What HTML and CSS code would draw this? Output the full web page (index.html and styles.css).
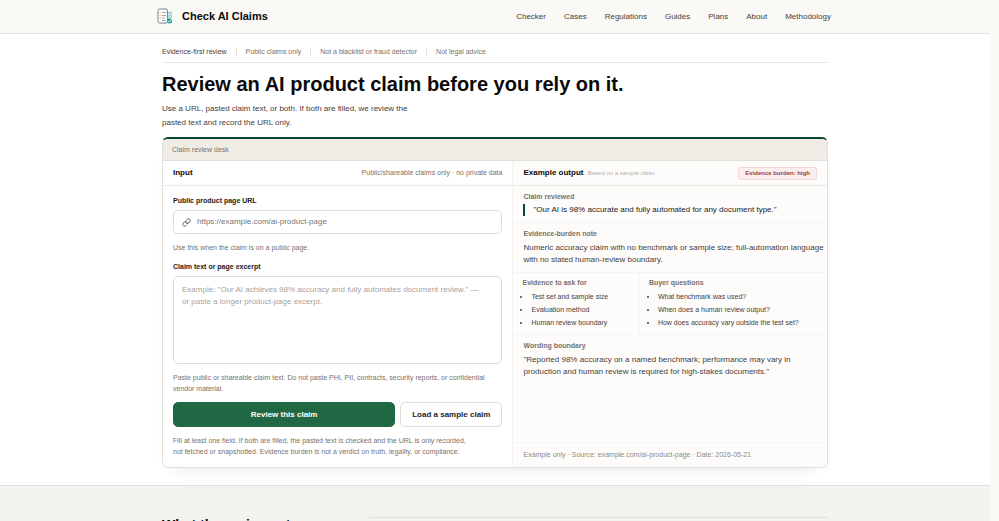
FILE: index.html
```
<!DOCTYPE html>
<html lang="en">
<head>
    <meta charset="UTF-8">
    <meta name="viewport" content="width=device-width, initial-scale=1.0">
    <title>Check AI Claims</title>
    <link rel="stylesheet" href="styles.css">
</head>
<body>
    <header class="site-header">
        <div class="header-inner">
            <a class="brand" href="#">
                <svg class="brand-icon" viewBox="0 0 32 32" fill="none" aria-hidden="true">
                    <rect x="2" y="2" width="19" height="28" rx="3" fill="#fff" stroke="#75808a" stroke-width="2"/>
                    <path d="M10 9h8M10 15h8M10 20h6M10 25h8" stroke="#858f98" stroke-width="1.6"/>
                    <path d="M5 9h3M5 15h3M5 20h3" stroke="#efc27a" stroke-width="2"/>
                    <path d="M21 10h4M21 16h4M21 21h4" stroke="#4bb5b0" stroke-width="1.6"/>
                    <circle cx="27" cy="10" r="2.5" stroke="#4bb5b0" stroke-width="1.5"/>
                    <circle cx="27" cy="17" r="2.5" stroke="#4bb5b0" stroke-width="1.5"/>
                    <circle cx="25" cy="26" r="5" fill="#2aa6a0"/>
                    <path d="M22.5 26l2 2 3.5-4" stroke="#fff" stroke-width="1.5"/>
                </svg>
                <span>Check AI Claims</span>
            </a>
            <nav class="site-nav" aria-label="Main">
                <a href="#">Checker</a>
                <a href="#">Cases</a>
                <a href="#">Regulations</a>
                <a href="#">Guides</a>
                <a href="#">Plans</a>
                <a href="#">About</a>
                <a href="#">Methodology</a>
            </nav>
        </div>
    </header>

    <main>
        <section class="hero">
            <div class="container">
                <ul class="notes">
                    <li>Evidence-first review</li>
                    <li>Public claims only</li>
                    <li>Not a blacklist or fraud detector</li>
                    <li>Not legal advice</li>
                </ul>
                <h1>Review an AI product claim before you rely on it.</h1>
                <p class="lead">Use a URL, pasted claim text, or both. If both are filled, we review the pasted text and record the URL only.</p>

                <div class="desk">
                    <div class="desk-title">Claim review desk</div>
                    <div class="desk-grid">
                        <form class="panel input-panel">
                            <div class="panel-head">
                                <h2>Input</h2>
                                <span class="panel-note">Public/shareable claims only · no private data</span>
                            </div>
                            <div class="form-body">
                                <label for="claim-url">Public product page URL</label>
                                <div class="url-field">
                                    <svg viewBox="0 0 24 24" fill="none" stroke="#57534e" stroke-width="2.4" stroke-linecap="round" stroke-linejoin="round" aria-hidden="true">
                                        <path d="M10 13a5 5 0 0 0 7.54.54l3-3a5 5 0 0 0-7.07-7.07l-1.72 1.71"/>
                                        <path d="M14 11a5 5 0 0 0-7.54-.54l-3 3a5 5 0 0 0 7.07 7.07l1.71-1.71"/>
                                    </svg>
                                    <input type="url" id="claim-url" placeholder="https://example.com/ai-product-page">
                                </div>
                                <p class="hint">Use this when the claim is on a public page.</p>
                                <label for="claim-text">Claim text or page excerpt</label>
                                <textarea id="claim-text" placeholder="Example: &quot;Our AI achieves 98% accuracy and fully automates document review.&quot; — or paste a longer product-page excerpt."></textarea>
                                <p class="hint">Paste public or shareable claim text. Do not paste PHI, PII, contracts, security reports, or confidential vendor material.</p>
                                <div class="actions">
                                    <button type="submit" class="btn btn-primary">Review this claim</button>
                                    <button type="button" class="btn btn-secondary">Load a sample claim</button>
                                </div>
                                <p class="hint fine-print">Fill at least one field. If both are filled, the pasted text is checked and the URL is only recorded, not fetched or snapshotted. Evidence burden is not a verdict on truth, legality, or compliance.</p>
                            </div>
                        </form>

                        <div class="panel output-panel">
                            <div class="panel-head">
                                <h2>Example output <small>Based on a sample claim</small></h2>
                                <span class="badge">Evidence burden: high</span>
                            </div>
                            <div class="block">
                                <h3>Claim reviewed</h3>
                                <blockquote>"Our AI is 98% accurate and fully automated for any document type."</blockquote>
                            </div>
                            <div class="block">
                                <h3>Evidence-burden note</h3>
                                <p>Numeric accuracy claim with no benchmark or sample size; full-automation language with no stated human-review boundary.</p>
                            </div>
                            <div class="lists">
                                <div class="list-col">
                                    <h3>Evidence to ask for</h3>
                                    <ul>
                                        <li>Test set and sample size</li>
                                        <li>Evaluation method</li>
                                        <li>Human review boundary</li>
                                    </ul>
                                </div>
                                <div class="list-col">
                                    <h3>Buyer questions</h3>
                                    <ul>
                                        <li>What benchmark was used?</li>
                                        <li>When does a human review output?</li>
                                        <li>How does accuracy vary outside the test set?</li>
                                    </ul>
                                </div>
                            </div>
                            <div class="block wording">
                                <h3>Wording boundary</h3>
                                <p>"Reported 98% accuracy on a named benchmark; performance may vary in production and human review is required for high-stakes documents."</p>
                            </div>
                            <div class="output-foot">Example only · Source: example.com/ai-product-page · Date: 2026-05-21</div>
                        </div>
                    </div>
                </div>
            </div>
        </section>

        <section class="returns">
            <div class="container returns-grid">
                <h2>What the review returns</h2>
                <div class="returns-list"></div>
            </div>
        </section>
    </main>
</body>
</html>
```
FILE: styles.css
```
* {
    box-sizing: border-box;
}
html {
    background: #faf9f5;
}
body {
    margin: 0 9px 0 0;
    font-family: "Liberation Sans", Arial, sans-serif;
    font-size: 8px;
    line-height: 12px;
    color: #44403c;
}
h1, h2, h3, p, ul, blockquote {
    margin: 0;
    padding: 0;
}
a {
    color: inherit;
    text-decoration: none;
}
.container {
    max-width: 666px;
    margin: 0 auto;
}

/* header */
.site-header {
    background: #faf9f5;
    border-bottom: 1px solid #e7e0da;
}
.header-inner {
    max-width: 676px;
    margin: 0 auto;
    padding: 8px 2px 9px 0;
    display: flex;
    align-items: center;
    justify-content: space-between;
}
.brand {
    display: flex;
    align-items: center;
    gap: 9px;
    font-size: 11px;
    line-height: 16px;
    font-weight: bold;
    color: #0c0a09;
}
.brand-icon {
    width: 16px;
    height: 16px;
}
.site-nav {
    display: flex;
    gap: 18px;
    padding-top: 2px;
}

/* hero */
.hero {
    background: #fff;
    border-bottom: 1px solid #e2dfd9;
    padding: 12px 0 17px;
}
.notes {
    list-style: none;
    display: flex;
    padding-bottom: 4px;
    border-bottom: 1px solid #efe6dd;
    font-size: 7px;
    color: #78716c;
}
.notes li:first-child {
    color: #44403c;
}
.notes li + li {
    margin-left: 9px;
}
.notes li + li::before {
    content: "";
    display: inline-block;
    height: 7px;
    border-left: 1px solid #e0ddd9;
    margin-right: 9px;
    vertical-align: -1px;
}
h1 {
    margin-top: 8px;
    font-size: 20px;
    line-height: 26px;
    color: #0c0a09;
}
.lead {
    max-width: 270px;
    margin: 5px 0 7px;
    line-height: 14px;
}

/* review desk */
.desk {
    border: 1px solid #e2dfd9;
    border-top: 2px solid #0b4630;
    border-radius: 6px;
    overflow: hidden;
    box-shadow: 0 8px 16px -12px rgba(28, 25, 23, 0.2);
}
.desk-title {
    background: #efece6;
    border-bottom: 1px solid #e2dfd9;
    padding: 5px 9px 4px;
    font-size: 7px;
    color: #78716c;
}
.desk-grid {
    display: grid;
    grid-template-columns: 10fr 9fr;
}
.panel {
    display: flex;
    flex-direction: column;
}
.output-panel {
    background: #fdfcfa;
    border-left: 1px solid #f5f3ef;
}
.panel-head {
    display: flex;
    align-items: center;
    justify-content: space-between;
    height: 25px;
    padding: 0 10px;
    border-bottom: 1px solid #eceae5;
}
.panel-head h2 {
    font-size: 8px;
    color: #0c0a09;
}
.panel-head small {
    margin-left: 2px;
    font-size: 6px;
    font-weight: normal;
    color: #b5b0a9;
}
.panel-note {
    font-size: 7px;
    color: #78716c;
}
.badge {
    padding: 0 6px;
    border: 1px solid #f3d9d6;
    border-radius: 3px;
    background: #fbefed;
    font-size: 6px;
    line-height: 11px;
    font-weight: bold;
    color: #9f4040;
}

/* form */
.form-body {
    padding: 9px 10px 10px;
}
label {
    display: block;
    margin-bottom: 3px;
    font-size: 7px;
    font-weight: bold;
    color: #1c1917;
}
.url-field {
    display: flex;
    align-items: center;
    gap: 6px;
    height: 24px;
    padding: 0 8px;
    border: 1px solid #dfdcd3;
    border-radius: 5px;
    margin-bottom: 8px;
}
.url-field svg {
    width: 9px;
    height: 9px;
}
.url-field input {
    flex: 1;
    border: 0;
    padding: 0;
    outline: none;
    background: none;
    font: inherit;
}
.url-field input::placeholder {
    color: #757575;
}
textarea {
    display: block;
    width: 100%;
    height: 88px;
    margin-bottom: 8px;
    padding: 7px 14px 7px 8px;
    border: 1px solid #dfdcd3;
    border-radius: 5px;
    font: inherit;
    resize: none;
}
textarea::placeholder {
    color: #a8a29e;
}
.hint {
    margin-bottom: 8px;
    font-size: 7px;
    line-height: 11px;
    color: #78716c;
}
.actions {
    display: flex;
    gap: 5px;
    margin-bottom: 8px;
}
.btn {
    height: 25px;
    border-radius: 5px;
    font: bold 8px "Liberation Sans", Arial, sans-serif;
}
.btn-primary {
    flex: 1;
    border: 1px solid #1f6843;
    background: #1f6843;
    color: #fff;
}
.btn-secondary {
    padding: 0 11px;
    border: 1px solid #dfdcd3;
    background: #fff;
    color: #292524;
}
.hint.fine-print {
    max-width: 300px;
    margin-bottom: 0;
}

/* example output */
h3 {
    font-size: 7px;
    line-height: 10px;
    color: #78716c;
}
.block {
    padding: 6px 2px 6px 10px;
    border-bottom: 1px solid #f7f5f2;
}
.block p {
    margin-top: 3px;
}
blockquote {
    margin-top: 2px;
    padding-left: 8px;
    border-left: 2px solid #0b4630;
    color: #1c1917;
}
.lists {
    display: grid;
    grid-template-columns: 2fr 3fr;
    border-bottom: 1px solid #f7f5f2;
}
.list-col {
    padding: 5px 9px;
}
.list-col + .list-col {
    border-left: 1px solid #f7f5f2;
}
.list-col ul {
    margin-top: 2px;
    padding-left: 9px;
}
.list-col li {
    font-size: 7px;
    line-height: 13px;
}
.wording {
    border-bottom: 0;
}
.output-foot {
    margin-top: auto;
    padding: 6px 10px;
    border-top: 1px solid #f7f5f2;
    font-size: 7px;
    color: #8f8a84;
}

/* what the review returns */
.returns {
    background: #f3f2ee;
    padding: 31px 0 30px;
}
.returns-grid {
    display: grid;
    grid-template-columns: 207px 1fr;
}
.returns h2 {
    font-size: 14px;
    line-height: 16px;
    color: #0c0a09;
}
.returns-list {
    border-top: 1px solid #e2dfd9;
}
```
